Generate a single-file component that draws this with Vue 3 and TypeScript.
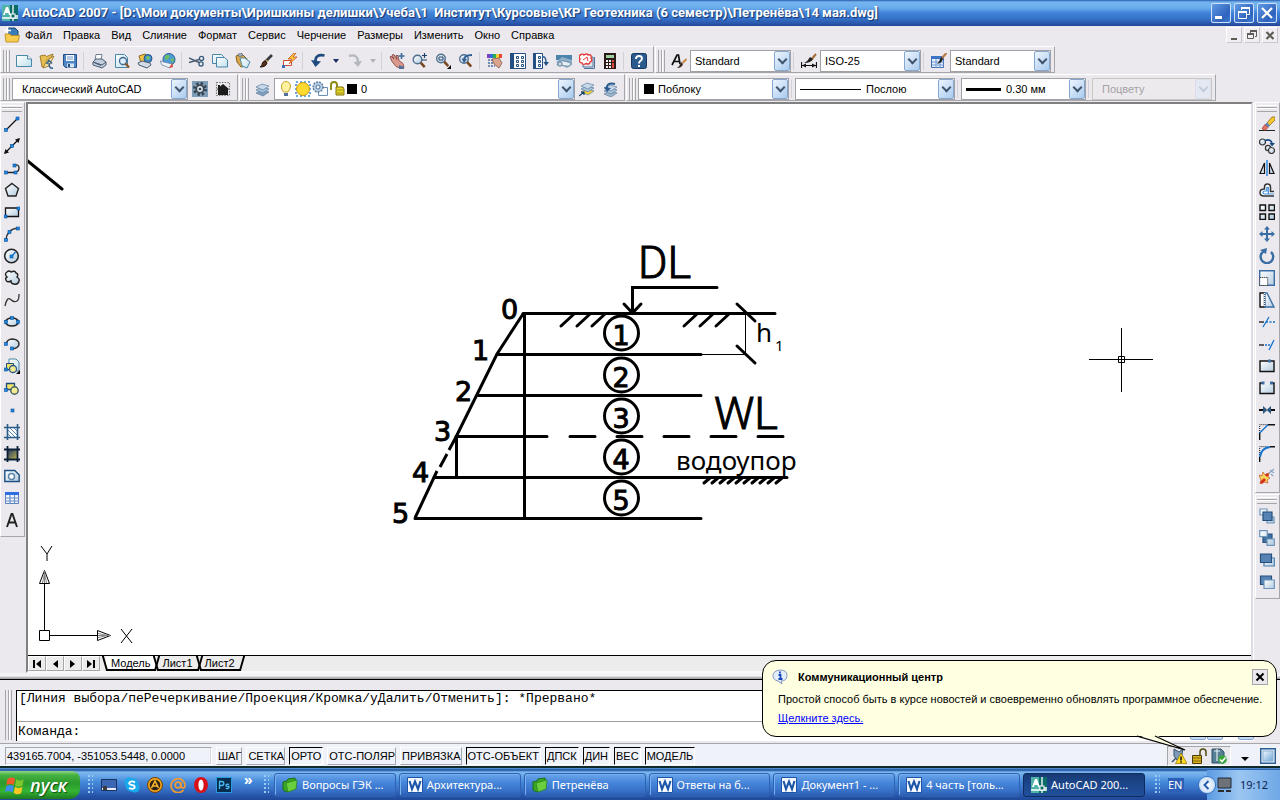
<script setup lang="ts">
import { ref } from 'vue'

type Item = { icon?: string; label?: string; sep?: boolean; drop?: boolean; dim?: boolean }

const sep: Item = { sep: true }
const tool = (icon: string, label: string): Item => ({ icon, label })

/* Small blue grip point used by the drafting icons */
const n = (x: number, y: number) =>
  `<rect x="${x}" y="${y}" width="3" height="3" fill="#1f8ae8" stroke="#0b4f94" stroke-width=".6"/>`
const lens = (x: number, y: number) =>
  `<circle cx="${x}" cy="${y}" r="4.3" fill="url(#glass)" stroke="#4f6f8f" stroke-width="1.4"/><path d="M${x + 3.2} ${y + 3.2}l4 4.4" stroke="#7a4a20" stroke-width="2.6"/>`
const stack = (x: number, y: number, c: string) =>
  `<g stroke="#5e7f9f" stroke-width=".7"><path d="M${x} ${y + 8}l6-3 7 2-6 4z" fill="${c}"/><path d="M${x} ${y + 5}l6-3 7 2-6 4z" fill="#a9c3dc"/><path d="M${x} ${y + 2}l6-3 7 2-6 4z" fill="#c6d8ea"/></g>`

const icons: Record<string, string> = {
  acad: '<rect width="16" height="16" fill="#0b6b66"/><path d="M0 0h8v16H0z" fill="#4fb3a8"/><path d="M1 10L4 2h2l3 8H7l-.6-2H3.400L3 10z" fill="#fff"/><path d="M11 0v16M8 11h8M0 13h16" stroke="#fff" stroke-width="1.300"/><rect x="9" y="9" width="4" height="4" fill="#0b6b66" stroke="#fff"/>',
  dwg: '<path d="M4 1h7l3 3v9H4z" fill="#3a7cb8" stroke="#1c4a78"/><path d="M0 3.500h7M3.500 0v7" stroke="#fff" stroke-width="1.600"/><path d="M1 7h5l1 1.500h8.500L14 15H2z" fill="#f8cd4e" stroke="#b88616" stroke-width=".8"/>',
  new: '<path d="M.5 2.500h11l4 3.500v7.500H.5z" fill="url(#paper)" stroke="#4a86a8"/><path d="M11.500 2.500v3.500h4" fill="#fff" stroke="#4a86a8"/>',
  open: '<path d="M1 3l5-1 1.500 1.500L14 1l-2 4-5 8-4 1z" fill="#e5bd52" stroke="#8f6a1c" stroke-width=".8"/><path d="M4 15l4-8 7-4-5 10z" fill="#f8e39a" stroke="#8f6a1c" stroke-width=".8"/><path d="M14 15q-4 1-4-5M7.500 11L10 7.500l3 3" fill="none" stroke="#35618f" stroke-width="1.500"/>',
  save: '<path d="M1.500 1.500h13v13h-11l-2-2z" fill="#4f86c6" stroke="#244f86"/><path d="M4 2h8v6H4z" fill="#f4f9ff"/><path d="M5 4h6M5 6h6" stroke="#7d9cc0"/><path d="M5 10.500h7v4H5z" fill="#d4e2f2"/><path d="M6 11h2v3H6z" fill="#244f86"/>',
  plot: '<path d="M4 7l1-5.500h6L10 7" fill="#fff" stroke="#6d7f96"/><path d="M2 9l3-3h6l4 3v3l-4 3-9-3z" fill="#c3cfdf" stroke="#4a5a70"/><path d="M2 9l9 3 4-3M4 10l6 2.500" fill="none" stroke="#4a5a70"/>',
  preview: '<path d="M1.500 1.500h9l3 3v10h-12z" fill="url(#paper)" stroke="#4a86a8"/><circle cx="9" cy="8" r="3.500" fill="#dcefff" stroke="#41688c" stroke-width="1.300"/><path d="M11.500 10.500l3.500 4" stroke="#8a5526" stroke-width="2.200"/>',
  publish: '<path d="M2 3l6-2 4 3-1 5-7 1z" fill="#f2c244" stroke="#8f6a1c"/><circle cx="11" cy="5.500" r="4" fill="#3f8fd0" stroke="#1f4f86"/><path d="M9 4q2-2 4 0 0 3-3 3z" fill="#6fc268"/><path d="M1 10l4-2 8 2 1 2-4 3-8-3z" fill="#d3dbe8" stroke="#4a5a70"/>',
  globe: '<circle cx="9" cy="6.500" r="6" fill="#4a9bd6" stroke="#2c5c94"/><path d="M5 3q3-2 5 0l-2 3-3 1zM10 6l4-1-1 5z" fill="#6cbf5f"/><path d="M0 8l8 2 5 1-3 4-8-3z" fill="#eef3f8" stroke="#5f7a98" stroke-width=".7"/><path d="M12 10l1 4-4 1z" fill="#d84a3a"/>',
  cut: '<path d="M0 5l10 4.500M0 9.500l10-3" stroke="#4c5f75" stroke-width="1.500"/><circle cx="12.500" cy="5.500" r="2.100" fill="none" stroke="#36587a" stroke-width="1.300"/><circle cx="12" cy="11" r="2.100" fill="none" stroke="#36587a" stroke-width="1.300"/>',
  copy: '<path d="M.5 1.500h9l2 2v7H.5z" fill="url(#paper)" stroke="#4a86a8"/><path d="M4.500 4.500h8l3 2.500v7h-11z" fill="url(#paper)" stroke="#4a86a8"/>',
  paste: '<path d="M1 3l6-2 5 5-1 7-5 1-4-5z" fill="#dba84a" stroke="#8d621b"/><path d="M3 1l4-.500 1 2-4 1z" fill="#b0bac6" stroke="#5a6573" stroke-width=".7"/><path d="M5 5h5l5 4-3 6-5-2z" fill="url(#paper)" stroke="#4a86a8"/>',
  brush: '<path d="M14 2L7 9" stroke="#3a3a3a" stroke-width="2.600"/><path d="M8 7l2 2" stroke="#cfa56a" stroke-width="1.500"/><path d="M7 8l2 2q-1 4-7 4 3-2 2-3 1-3 3-3z" fill="#55331e" stroke="#20140c"/>',
  blockedit: '<path d="M2.500 7.500h8v5h-8z" fill="#fff" stroke="#c8502c"/><path d="M1 12h3v3H1z" fill="#3b6fb0"/><path d="M13 0L7 6h4l-3 5 8-7h-4l3-4z" fill="#ffc93a" stroke="#c8502c" stroke-width=".8"/>',
  undo: '<path d="M14.500 2.500C8 1 5 4 5.500 9" fill="none" stroke="#1e4a80" stroke-width="2.600"/><path d="M1 7l4.500 7L11 8.500z" fill="#1e4a80"/>',
  redo: '<path d="M2 3C8 1 11 4 11 9" fill="none" stroke="#b4b8bf" stroke-width="2.400"/><path d="M6.500 9L11 14l4-6z" fill="#b4b8bf"/>',
  pan: '<path d="M1 4l1-1 3 3-2-4 2-.5 3 5-1-4h2l1 5 4 3 1 4-3 1-5-2-4-5z" fill="#d99a8d" stroke="#7e3f3c" stroke-width=".8"/><path d="M12.500 0v6M9.500 3h6" stroke="#3f6b9b" stroke-width="1.600"/><path d="M10 12l5 2v2h-5z" fill="#52709a"/>',
  zoomrt: lens(5.5, 6.5) + '<path d="M12.500 0v5M10 2.500h5M10 7h5" stroke="#223f63" stroke-width="1.200"/>',
  zoomwin: lens(6, 5.5) + '<path d="M4 4h4v3H4z" fill="none" stroke="#28486b"/><path d="M16 12v4h-4z" fill="#000"/>',
  zoomprev: lens(6, 6) + '<path d="M6 7q0-5 8-5" fill="none" stroke="#315f92" stroke-width="2"/><path d="M3.500 5.500L6 10l3-4z" fill="#315f92"/>',
  props: '<path d="M0 1h3v4H0z" fill="#7a3fc0"/><path d="M3 1h3v4H3z" fill="#2f6fe0"/><path d="M6 1h3v4H6z" fill="#2cb05a"/><path d="M9 1h3v4H9z" fill="#f0d13a"/><path d="M12 1h3v4h-3z" fill="#e8482e"/><path d="M1 7h8M1 10h6M1 13h7" stroke="#4e6f96" stroke-width="1.600" stroke-dasharray="2 1"/><path d="M5 6l7-1 3 5-3 5-5-4z" fill="#dba48f" stroke="#7e4a3c" stroke-width=".7"/>',
  dcenter: '<path d="M.5.5h15v15H.5z" fill="#fff" stroke="#234f82"/><path d="M0 0h4v16H0z" fill="#234f82"/><g fill="none" stroke="#234f82"><path d="M6.500 3.500h2v2h-2zM11.500 3.500h2v2h-2zM6.500 7.500h2v2h-2zM11.500 7.500h2v2h-2zM6.500 11.500h2v2h-2zM11.500 11.500h2v2h-2z"/></g>',
  palettes: '<path d="M.5.5h9v15h-9z" fill="#fff" stroke="#234f82"/><path d="M0 0h3v16H0z" fill="#234f82"/><path d="M5.500 3.500h2v2h-2zM5.500 7.500h2v2h-2zM5.500 11.500h2v2h-2z" fill="none" stroke="#234f82"/><path d="M9 4q4-1 4 5" fill="none" stroke="#3f6b9b" stroke-width="1.600"/><path d="M10.500 9l2.500 4 3-4z" fill="#234f82"/>',
  sheetset: '<path d="M0 2h16v5H0z" fill="#4d84ac"/><path d="M0 9L6 4l10 3v5l-5 3z" fill="#8fb0c8"/><path d="M1 12q2-5 7-4l7 2q-1 4-5 3z" fill="#e6eff5" stroke="#5a7c98" stroke-width=".8"/><circle cx="4" cy="11" r="2.200" fill="#cbdbe6" stroke="#5a7c98"/>',
  markup: '<path d="M4 4h10v10H4z" fill="#dfe6ee" stroke="#51739b"/><path d="M2 1.500q2-1 3 .5 3-2 4 0 4-1 3 3 2 3-1 4 0 3-4 1.500-3 2-4-.5-4-1-2-4-2-3 1-4.500z" fill="#fff" stroke="#e43b3b" stroke-width="1.400"/><path d="M4 7l4-3 1 4" fill="none" stroke="#e43b3b"/><path d="M15.500 4v11.500H5" fill="none" stroke="#51739b"/>',
  calc: '<path d="M2 0h12v16H2z" fill="#2a1a1a"/><path d="M4 2h8v3H4z" fill="#9fd0a0"/><g fill="#f2f2f2"><path d="M4 7h2v2H4zM7 7h2v2H7zM4 10h2v2H4zM7 10h2v2H7zM4 13h2v2H4zM7 13h2v2H7z"/></g><path d="M10 7h2v2h-2zM10 10h2v5h-2z" fill="#e0483a"/>',
  help: '<rect x=".5" y=".5" width="15" height="15" rx="2" fill="#2b5a8e" stroke="#173a62"/><path d="M5 6q0-3 3-3t3 2.500q0 1.500-1.500 2.300Q8 8.600 8 10.500" fill="none" stroke="#fff" stroke-width="1.900"/><path d="M7 12h2v2H7z" fill="#fff"/>',
  textstyle: '<path d="M1 12L6 2h1.500L9 11M3 8.500h5" fill="none" stroke="#111" stroke-width="1.700"/><path d="M15.500 6l-4 4" stroke="#c98a4a" stroke-width="2"/><path d="M10 9l2 2q-1 4-6 4 3-2 4-6z" fill="#3b2a20"/>',
  dimstyle: '<path d="M.5 9v6M15.500 9v6M1 12.500h14" stroke="#111" stroke-width="1.200"/><path d="M1 12.500l4-2v4zM15 12.500l-4-2v4z" fill="#111"/><path d="M15 1l-5 6" stroke="#a66a35" stroke-width="2"/><path d="M9 4l3 2q-2 4-9 4 4-2 6-6z" fill="#222"/>',
  tablestyle: '<path d="M.5 3.500h12v11H.5z" fill="#e6f0ff" stroke="#3e6db4"/><path d="M0 3h13v3H0z" fill="#3e73c8"/><path d="M1 9h12M1 12h12M5 6v9M9 6v9" stroke="#6f98d4"/><path d="M15.500 0L11 5" stroke="#b97b3d" stroke-width="2.200"/><path d="M10 4l2 2q-1 4-6 5 3-3 4-7z" fill="#222"/>',
  gear: '<path d="M0 0h16v16H0z" fill="#7d9db8"/><circle cx="8" cy="8" r="5" fill="none" stroke="#38444f" stroke-width="4" stroke-dasharray="2.100 1.820"/><circle cx="8" cy="8" r="3.700" fill="#d9e3ea" stroke="#38444f" stroke-width="1.600"/><circle cx="8" cy="8" r="1.300" fill="#38444f"/>',
  home: '<path d="M1.500 1.500h13v13h-13z" fill="none" stroke="#777" stroke-width="1.200" stroke-dasharray="1.500 1.200"/><path d="M2 8l6-5 6 5-1 1v5H3V9z" fill="#1c1c1c"/><path d="M3 4h2v3H3z" fill="#1c1c1c"/>',
  layers: stack(1, 4, '#7fa0bf'),
  layermake: stack(2, 3, '#f5d232') + '<path d="M0 15l5-4M2 11h3v3" fill="none" stroke="#123f70" stroke-width="1.200"/>',
  layerprev: stack(2, 5, '#9fb7cc') + '<path d="M5 8q-1-7 8-5" fill="none" stroke="#2d5b8e" stroke-width="2"/><path d="M2 6l3 5 4-4z" fill="#2d5b8e"/>',
  bulb: '<path d="M5.500 11Q3 8 3.500 5a4.500 4.500 0 0 1 9 0q0 3-2.500 6z" fill="#fff3a0" stroke="#c8a42c"/><path d="M6 12h4v3H6z" fill="#54709c"/>',
  sun: '<path d="M1 1h14v14H1z" fill="none" stroke="#6da8dc" stroke-width="2" stroke-dasharray="2 2"/><circle cx="8" cy="8" r="6.500" fill="#ffd92e" stroke="#c89a1a"/>',
  vp: '<path d="M6.500 6.500h9v8h-9z" fill="#f7fbff" stroke="#6d8fb4"/><circle cx="6" cy="6" r="5" fill="#b9cde2" stroke="#54789e" stroke-width="1.300" stroke-dasharray="2 1"/><circle cx="6" cy="6" r="2" fill="#eef5fb" stroke="#54789e"/>',
  lock: '<path d="M2 9V4q0-3 3-3t3 3v3" fill="none" stroke="#8d8b18" stroke-width="2"/><path d="M7 6h7l1 2v6H7z" fill="#e9da2b" stroke="#7c7010"/><path d="M8 9h6M8 12h6" stroke="#9b8d18"/>',
  line: '<path d="M2 14L14 2" stroke="#111" stroke-width="1.300"/>' + n(0.5, 12.5) + n(12, 1),
  xline: '<path d="M1 15L15 1" stroke="#111" stroke-width="1.300"/><path d="M0 16l1.500-5 3.500 3.500zM16 0l-5 1.500L14.500 5z" fill="#111"/>' + n(6.5, 6.5),
  pline: '<path d="M2 12.500h9M10 5q5-1 5 3t-4 4" fill="none" stroke="#222" stroke-width="1.300"/>' + n(0.5, 11) + n(10, 11) + n(9, 4),
  polygon: '<path d="M8 1.500l6.500 5L12 14H4L1.500 6.500z" fill="url(#glass)" stroke="#222" stroke-width="1.400"/>',
  rect: '<path d="M1.500 4h13v8.500h-13z" fill="url(#glass)" stroke="#111" stroke-width="1.300"/>' + n(0, 11) + n(13, 3),
  arc: '<path d="M2 14Q3 3 14 2" fill="none" stroke="#333" stroke-width="1.300"/>' + n(0.5, 12.5) + n(4, 4.5) + n(12.5, 1),
  circle: '<circle cx="7.500" cy="8" r="6.800" fill="url(#glass)" stroke="#222" stroke-width="1.500"/><path d="M7.500 8.500l4-4.500" stroke="#1673cc" stroke-width="1.300"/>' + n(6, 7),
  cloud: '<path d="M3 2q2-2 4 0 4-2 5 1 3 1 1 4 3 2 2 4-1 4-5 3-3 0-3-3-4 2-5-1-1-2 1-3-3-3 0-5z" fill="url(#glass)" stroke="#222" stroke-width="1.400"/>',
  spline: '<path d="M1 14Q3 5 6 7q4 4 7 2 2-1 2-7" fill="none" stroke="#333" stroke-width="1.300"/>',
  ellipse: '<ellipse cx="8" cy="8" rx="6.500" ry="4" fill="url(#glass)" stroke="#222" stroke-width="1.500"/>' + n(0.5, 6.5) + n(12.500, 6.5) + n(6.5, 2.5),
  earc: '<path d="M2 8q1-5 7-5 6 1 6 5t-7 5" fill="url(#glass)" stroke="#333" stroke-width="1.500"/>' + n(0.5, 6.5) + n(6.5, 11),
  insert: '<path d="M5 1h7l3 3v9H5z" fill="url(#paper)" stroke="#4a86a8"/><path d="M2.500 5.500h7v6h-7z" fill="#f5e56b" stroke="#1d4a78"/><circle cx="9" cy="11" r="3.500" fill="#f3ea94" stroke="#2f5c86" stroke-width="1.300"/><path d="M16 12v4h-4z" fill="#000"/>' + n(0.5, 10),
  block: '<path d="M2.500 3.500h8v6h-8z" fill="#f5e56b" stroke="#1d4a78" stroke-width="1.300"/><circle cx="10.500" cy="10.500" r="3.700" fill="#f3ea94" stroke="#3b5d63" stroke-width="1.400"/>' + n(0.5, 8.5),
  point: n(7, 7),
  hatch: '<path d="M4 4h9v9H4z" fill="#fff"/><path d="M4 10l3 3M4 6l7 7M6 4l7 7M10 4l3 3" stroke="#5a86b0"/><path d="M3.500 0v16M13.500 0v16M0 3.500h16M0 13.500h16" stroke="#2a5c8a" stroke-width="1.600"/>',
  gradient: '<path d="M3 3h10v10H3z" fill="url(#olive)"/><path d="M3.500 0v16M13.500 0v16M0 3.500h16M0 13.500h16" stroke="#0c2038" stroke-width="1.800"/>',
  region: '<path d="M.8 2.500h10l4.400 4.500v6.500H.8z" fill="url(#glass)" stroke="#1c4f82" stroke-width="1.400"/><circle cx="7.500" cy="8.500" r="3" fill="#fff" stroke="#5a86ac" stroke-width="1.500"/>',
  table: '<path d="M1.500 2.500h13v11h-13z" fill="#f2f7ff" stroke="#5a7fbd"/><path d="M1 2h14v3H1z" fill="#2d6fe2"/><path d="M1 8h14M1 11h14M6 5v9M10.500 5v9" stroke="#6b90c8" stroke-width="1.200"/>',
  mtext: '<path d="M3 15L7.500 2h1L13 15M4.500 10.500h7" fill="none" stroke="#222" stroke-width="1.900"/>',
  erase: '<path d="M0 14.500h16" stroke="#222"/><path d="M8 7l5-6h3v3l-6 6z" fill="#f7c931" stroke="#8d6a10" stroke-width=".8"/><path d="M8 6.500l3 3-2 2-3-3z" fill="#5f84bd"/><path d="M6 8.500l3 3-3 3-3-2z" fill="#e8735f" stroke="#8c3428" stroke-width=".7"/>',
  mcopy: '<circle cx="3.500" cy="4" r="3" fill="url(#glass)" stroke="#333" stroke-width="1.200"/><circle cx="9" cy="10" r="2.600" fill="url(#glass)" stroke="#333" stroke-width="1.200"/><circle cx="12.500" cy="12.500" r="3" fill="url(#glass)" stroke="#333" stroke-width="1.200"/><path d="M6 2.500q6-2 7 3" fill="none" stroke="#164b84" stroke-width="1.800"/><path d="M10.500 5h5.500l-3 3.500z" fill="#164b84"/>',
  mirror: '<path d="M8 0v16" stroke="#1f7fd8" stroke-width="1.400"/><path d="M5.500 3v10.500H1zM10.500 3v10.500H15z" fill="url(#glass)" stroke="#111" stroke-width="1.200"/>',
  offset: '<path d="M15 9.500h-3.500V5q0-3-3-3t-3 3v2Q1 7 1 10.500T5 14h10" fill="#fff" stroke="#333" stroke-width="1.500"/><path d="M15 12H6q-2 0-2-1.500T6 9h1.800V5.500h1.500V12" fill="none" stroke="#3d8fe0" stroke-width="1.200"/>',
  array: '<g fill="url(#glass)" stroke="#111" stroke-width="1.400"><path d="M1 1h5.500v5.500H1zM10 1h5.500v5.500H10zM1 10h5.500v5.500H1zM10 10h5.500v5.500H10z"/></g>',
  move: '<path d="M8 2v12M2 8h12" stroke="#3a6ea5" stroke-width="2"/><path d="M8 0l3 3.500H5zM8 16l3-3.500H5zM0 8l3.500-3v6zM16 8l-3.500-3v6z" fill="#3a6ea5"/>',
  rotate: '<path d="M4.500 3.500A6.300 6.300 0 1 0 12 4" fill="none" stroke="#3a6ea5" stroke-width="2.400"/><path d="M1 2l7-2-1 6z" fill="#3a6ea5"/>',
  scale: '<path d="M.7.7h14.600v14.600H.7z" fill="url(#glass)" stroke="#3a6ea5" stroke-width="1.400"/><path d="M.7 7.500h8v8h-8z" fill="#fff" stroke="#111" stroke-dasharray="1 1"/>',
  stretch: '<path d="M5.500 1v14H1V1z" fill="#fff" stroke="#111" stroke-width="1.400"/><path d="M6 1h2l7 14H6z" fill="url(#glass)" stroke="#3a6ea5" stroke-width="1.400"/><path d="M5.500 1v14" stroke="#fff" stroke-width="1.400" stroke-dasharray="1 1"/>',
  trim: '<path d="M0 8h5" stroke="#111" stroke-width="1.300"/><path d="M7 8h9" stroke="#1673cc" stroke-width="1.300" stroke-dasharray="2 1.500"/><path d="M4 13l6-10" stroke="#1673cc" stroke-width="1.300"/>',
  extend: '<path d="M0 9h5" stroke="#111" stroke-width="1.300"/><path d="M6 9h5" stroke="#1673cc" stroke-width="1.300" stroke-dasharray="2 1"/><path d="M10 14l5-10" stroke="#1673cc" stroke-width="1.300"/>',
  break1: '<path d="M1 3h14v10.500H1z" fill="url(#glass)" stroke="#111" stroke-width="1.400"/><path d="M9 1.500h3v3H9z" fill="#3a6ea5"/>',
  break2: '<path d="M1 3h14v10.500H1z" fill="url(#glass)"/><path d="M3 3H1v10.500h14V3h-2" fill="none" stroke="#111" stroke-width="1.400"/><path d="M2.500 1.500h3v3h-3zM11 1.500h3v3h-3z" fill="#3a6ea5"/>',
  join: '<path d="M0 8h5M11 8h5" stroke="#111" stroke-width="1.800"/><path d="M4 4L8.500 8 4 12zM12 4L7.500 8l4.500 4z" fill="#2d587f"/>',
  chamfer: '<path d="M.7 16V9M9 .7h7" stroke="#111" stroke-width="1.400"/><path d="M.7 9V.7H9" fill="none" stroke="#111" stroke-dasharray="1 1"/><path d="M.7 9L9 .7" stroke="#1673cc" stroke-width="1.400"/>',
  fillet: '<path d="M.7 16v-5M11 .7h5" stroke="#111" stroke-width="1.400"/><path d="M.7 9V.7H9" fill="none" stroke="#111" stroke-dasharray="1 1"/><path d="M1 11Q2 2 11 1" fill="none" stroke="#1673cc" stroke-width="2"/>',
  explode: '<path d="M9 6L15 1M11 2l4 3M12 6l2 2" stroke="#88a6c4" stroke-width="1.200"/><path d="M0 7l3 1 1-4 2 3 4-2-1 4 2 1-3 2 1 3-4-1-4 2 1-4z" fill="#f8d85a" stroke="#c4521f" stroke-width=".7"/><path d="M1 14l4-4 2 2-4 4zM6 7l2-2 2 2-2 2z" fill="#d42d1d"/>',
  order1: '<path d="M1 1h7v6H1zM8 9h7v6H8z" fill="url(#glass)" stroke="#6d94b8" stroke-width="1.200"/><path d="M4 4h9v8.500H4z" fill="#5683b3" stroke="#274f7c" stroke-width="1.200"/>',
  order2: '<path d="M4 4h9v8.500H4z" fill="#3f70a4" stroke="#274f7c" stroke-width="1.200"/><path d="M.7.7h7.500v6H.7zM8 9h7.300v6.300H8z" fill="url(#glass)" stroke="#6d94b8" stroke-width="1.200"/>',
  order3: '<path d="M5 6h10.300v8H5z" fill="url(#glass)" stroke="#4a7fae" stroke-width="1.200"/><path d="M1.500 2h11v8.500h-11z" fill="#5683b3" stroke="#274f7c" stroke-width="1.200"/>',
  order4: '<path d="M1.500 2h11v8.500h-11z" fill="#5683b3" stroke="#274f7c" stroke-width="1.200"/><path d="M5 6h10.300v8.500H5z" fill="url(#glass)" stroke="#6d94b8" stroke-width="1.200"/>',
  desktop: '<path d="M.5 2.500h15v11H.5z" fill="#3a66b4" stroke="#1b3160"/><path d="M1 11h14v2H1z" fill="#e8eef5"/><path d="M2 9h4v4H2z" fill="#3d3d3d"/>',
  skype: '<circle cx="5" cy="5" r="4.500" fill="#18a9ea"/><circle cx="11" cy="11" r="4.500" fill="#18a9ea"/><circle cx="8" cy="8" r="6.700" fill="#18a9ea"/><path d="M11 5.500Q8 3.500 6 5t.500 2.600L10 8.600q1.500 1.400 0 2.700t-5-.3" fill="none" stroke="#fff" stroke-width="1.900"/>',
  aimp: '<circle cx="8" cy="8" r="7.500" fill="#f2a31c" stroke="#6b4308"/><circle cx="8" cy="8" r="5.300" fill="#2c2114"/><path d="M4.500 11L8 4l3.500 7M6 9h4" fill="none" stroke="#f9b733" stroke-width="1.600"/>',
  mail: '<path d="M13.500 13A7 7 0 1 1 15 8q0 3-2 3t-2-2V5" fill="none" stroke="#f09a35" stroke-width="1.700"/><circle cx="8" cy="8" r="2.800" fill="none" stroke="#f09a35" stroke-width="1.700"/>',
  opera: '<ellipse cx="8" cy="8" rx="7" ry="8" fill="#d81118"/><ellipse cx="8" cy="8" rx="2.600" ry="5.500" fill="#fff"/>',
  ps: '<path d="M.5.5h15v15H.5z" fill="#062d4d" stroke="#2c9be0"/><path d="M3.500 12V4.500h2.300q2 0 2 2t-2 2H3.500M13 7.500q-3-.8-3 .8t3 1.200q.6 2.700-3.200 1.800" fill="none" stroke="#4dbcf5" stroke-width="1.300"/>',
  folder: '<path d="M1 5l4-1 1-2 7-1 1 10-9 4-4-2z" fill="#3aa827" stroke="#1f6d14"/><path d="M4 6l11-3-1 9-8 3z" fill="#69cf3f" stroke="#2a8419" stroke-width=".7"/>',
  word: '<path d="M.5.5h15v15H.5z" fill="#f4f8fd" stroke="#1c55a8"/><path d="M2.500 4L5 12l3-7.500L11 12l2.500-8" fill="none" stroke="#1c55a8" stroke-width="2.100"/>',
  comm: '<path d="M3 1l5 3 4-3-1 5 1 6H6L3 8z" fill="#7f9ab8" stroke="#34506e"/><path d="M1 14l4-4" stroke="#34506e" stroke-width="1.400"/><path d="M10 5l6 10.500H4.500z" fill="#ffd91f" stroke="#8c7300" stroke-width=".7"/><path d="M10 8.500v4M10 13.200v1.600" stroke="#111" stroke-width="1.500"/>',
  unlocked: '<path d="M9 7V4q0-3 3-3t3 3v4" fill="none" stroke="#544a12" stroke-width="1.500"/><path d="M1.500 7.500h9v8h-9z" fill="#dcb51c" stroke="#4b3c08"/><path d="M2 10h8M2 13h8" stroke="#7b6410"/>',
  trust: '<path d="M1 1h9l3 3v11H1z" fill="#567f96" stroke="#2c4f66"/><path d="M3 3h6M6 1v12" stroke="#e1ecf2" stroke-width="1.200"/><circle cx="11.500" cy="11.500" r="4.300" fill="#38a53a"/><path d="M9 11.500l2 2 3.500-4" fill="none" stroke="#fff" stroke-width="1.600"/>',
  clean: '<path d="M.7.7h14.600v14.600H.7z" fill="#dcecf8" stroke="#2d5f94" stroke-width="1.400"/><path d="M3 3h10v10H3z" fill="url(#pane)" stroke="#8fb3d4"/>',
  monitor: '<path d="M1 1h13v10H1z" fill="#6e7278" stroke="#1d2a3a"/><path d="M1 14h6M9 14h5" stroke="#2a2a2a" stroke-width="2.200"/>',
  info: '<path d="M8 1q7 0 7 5.500T9 12l1 3-4-3Q1 11 1 6.500T8 1z" fill="#e4eefb" stroke="#8098c0"/><path d="M8 2.500v2M6.500 6H8.500V10M6.500 10h4" fill="none" stroke="#1846b8" stroke-width="1.800"/>',
  flag: '<path d="M2 3q3-2 6 0L7 8Q4 6.500 1 8z" fill="#ef5b2a"/><path d="M9 3.300q3 2 6 0l-1 5q-3 2-6 0z" fill="#7fc62c"/><path d="M1 9q3-1.600 6 0l-1 5q-3-2-6-.5z" fill="#3f8df0"/><path d="M8 9.300q3 2 6 0l-1 5q-3 2-6 0z" fill="#fbc821"/>',
}

const menus = ['Файл', 'Правка', 'Вид', 'Слияние', 'Формат', 'Сервис', 'Черчение', 'Размеры', 'Изменить', 'Окно', 'Справка']

const standard: Item[] = [
  tool('new', 'Создать'), tool('open', 'Открыть'), tool('save', 'Сохранить'), sep,
  tool('plot', 'Печать'), tool('preview', 'Предварительный просмотр'), tool('publish', 'Публикация'), tool('globe', '3D DWF'), sep,
  tool('cut', 'Вырезать'), tool('copy', 'Копировать'), tool('paste', 'Вставить'), tool('brush', 'Копирование свойств'), tool('blockedit', 'Редактор блоков'), sep,
  tool('undo', 'Отменить'), { drop: true, label: 'Список отмены' }, tool('redo', 'Повторить'), { drop: true, dim: true, label: 'Список повтора' }, sep,
  tool('pan', 'Панорамирование'), tool('zoomrt', 'Зумирование'), tool('zoomwin', 'Показать рамкой'), tool('zoomprev', 'Показать предыдущий'), sep,
  tool('props', 'Свойства'), tool('dcenter', 'Центр управления'), tool('palettes', 'Палитры'), tool('sheetset', 'Подшивки'), tool('markup', 'Пометки'), tool('calc', 'Калькулятор'), sep,
  tool('help', 'Помощь'),
]

const styles = [
  { icon: 'textstyle', label: 'Текстовый стиль', value: 'Standard' },
  { icon: 'dimstyle', label: 'Размерный стиль', value: 'ISO-25' },
  { icon: 'tablestyle', label: 'Стиль таблиц', value: 'Standard' },
]

const draw: Item[] = [
  tool('line', 'Отрезок'), tool('xline', 'Прямая'), tool('pline', 'Полилиния'), tool('polygon', 'Многоугольник'), tool('rect', 'Прямоугольник'),
  tool('arc', 'Дуга'), tool('circle', 'Круг'), tool('cloud', 'Облако'), tool('spline', 'Сплайн'), tool('ellipse', 'Эллипс'), tool('earc', 'Эллиптическая дуга'),
  tool('insert', 'Вставить блок'), tool('block', 'Создать блок'), tool('point', 'Точка'), tool('hatch', 'Штриховка'), tool('gradient', 'Градиент'),
  tool('region', 'Область'), tool('table', 'Таблица'), tool('mtext', 'Многострочный текст'),
]
const modify: Item[] = [
  tool('erase', 'Стереть'), tool('mcopy', 'Копировать объект'), tool('mirror', 'Зеркало'), tool('offset', 'Подобие'), tool('array', 'Массив'), tool('move', 'Перенести'),
  tool('rotate', 'Повернуть'), tool('scale', 'Масштаб'), tool('stretch', 'Растянуть'), tool('trim', 'Обрезать'), tool('extend', 'Удлинить'), tool('break1', 'Разорвать в точке'),
  tool('break2', 'Разорвать'), tool('join', 'Соединить'), tool('chamfer', 'Фаска'), tool('fillet', 'Сопряжение'), tool('explode', 'Расчленить'),
]
const order: Item[] = [tool('order1', 'На передний план'), tool('order2', 'На задний план'), tool('order3', 'Перед объектами'), tool('order4', 'За объектами')]

const sheets = ['Модель', 'Лист1', 'Лист2']
const activeSheet = ref('Модель')

const modes = ref([
  { name: 'ШАГ', on: false }, { name: 'СЕТКА', on: false }, { name: 'ОРТО', on: true }, { name: 'ОТС-ПОЛЯР', on: false },
  { name: 'ПРИВЯЗКА', on: false }, { name: 'ОТС-ОБЪЕКТ', on: true }, { name: 'ДПСК', on: true }, { name: 'ДИН', on: true },
  { name: 'ВЕС', on: true }, { name: 'МОДЕЛЬ', on: true },
])

const quick = [tool('desktop', 'Рабочий стол'), tool('skype', 'Skype'), tool('aimp', 'AIMP'), tool('mail', 'Агент'), tool('opera', 'Opera'), tool('ps', 'Photoshop')]
const tasks = [
  { icon: 'folder', name: 'Вопросы ГЭК ...' }, { icon: 'word', name: 'Архитектура...' }, { icon: 'folder', name: 'Петренёва' },
  { icon: 'word', name: 'Ответы на б...' }, { icon: 'word', name: 'Документ1 - ...' }, { icon: 'word', name: '4 часть [толь...' },
  { icon: 'acad', name: 'AutoCAD 200...', active: true },
]

const command = ref('')
const balloon = ref(true)

/* Numbers standing at the left end of each soil boundary */
const levels = [
  { x: 501, y: 319, t: '0' }, { x: 472, y: 360, t: '1' }, { x: 455, y: 401, t: '2' },
  { x: 434, y: 441, t: '3' }, { x: 412, y: 482, t: '4' }, { x: 392, y: 523, t: '5' },
]
const layers = [333, 375, 416, 457, 498]
const soil = [561, 577, 592, 684, 700, 716]
const rock = Array.from({ length: 10 }, (_, i) => 704 + i * 8)
</script>

<template>
  <div class="app">
    <svg class="defs" aria-hidden="true">
      <defs>
        <linearGradient id="glass" x1="0" y1="0" x2="1" y2="1"><stop offset="0" stop-color="#fff" /><stop offset="1" stop-color="#b4cce0" /></linearGradient>
        <linearGradient id="paper" x1="0" y1="0" x2="1" y2="1"><stop offset="0" stop-color="#fff" /><stop offset="1" stop-color="#bfe0ee" /></linearGradient>
        <linearGradient id="olive" x1="0" y1="0" x2="1" y2="1"><stop offset="0" stop-color="#17306a" /><stop offset="1" stop-color="#b9ae4a" /></linearGradient>
        <linearGradient id="pane" x1="0" y1="0" x2="1" y2="1"><stop offset="0" stop-color="#f0f8ff" /><stop offset="1" stop-color="#6fa5d6" /></linearGradient>
      </defs>
    </svg>

    <header class="title">
      <svg class="ic" viewBox="0 0 16 16" v-html="icons.acad" />
      <h1>AutoCAD 2007 - [D:\Мои документы\Иришкины делишки\Учеба\1&nbsp; Институт\Курсовые\КР Геотехника (6 семестр)\Петренёва\14 мая.dwg]</h1>
      <div class="winbtns">
        <button aria-label="Свернуть"><svg viewBox="0 0 16 16"><path d="M2 11h7v3H2z" fill="#fff" /></svg></button>
        <button aria-label="Восстановить"><svg viewBox="0 0 16 16"><path d="M5.500 5V2.500h8v7H11M2.500 6.500h8v7h-8z" fill="none" stroke="#fff" /><path d="M5 2h9v2H5zM2 6h9v2H2z" fill="#fff" /></svg></button>
        <button aria-label="Закрыть"><svg viewBox="0 0 16 16"><path d="M3 3l10 10M13 3L3 13" stroke="#fff" stroke-width="2.200" /></svg></button>
      </div>
    </header>

    <nav class="menu">
      <svg class="ic" viewBox="0 0 16 16" v-html="icons.dwg" />
      <button v-for="m in menus" :key="m">{{ m }}</button>
      <div class="docbtns">
        <button aria-label="Свернуть документ"><svg viewBox="0 0 12 12"><path d="M3 9h6v2H3z" fill="#5f5b55" /></svg></button>
        <button aria-label="Восстановить документ"><svg viewBox="0 0 12 12"><path d="M4.500 4V2.500h6v5H9M1.500 5.500h6v4h-6z" fill="none" stroke="#5f5b55" /><path d="M4 1h7v2H4zM1 4h7v2H1z" fill="#5f5b55" /></svg></button>
        <button aria-label="Закрыть документ"><svg viewBox="0 0 12 12"><path d="M2.500 3l7 7M9.500 3l-7 7" stroke="#5f5b55" stroke-width="2.200" /></svg></button>
      </div>
    </nav>

    <div class="row">
      <div class="bar">
        <i class="grip" />
        <template v-for="(t, i) in standard" :key="i">
          <i v-if="t.sep" class="sep" />
          <button v-else-if="t.drop" class="drop" :class="{ dim: t.dim }" :aria-label="t.label"><svg viewBox="0 0 6 4"><path d="M0 0h6L3 4z" fill="currentColor" /></svg></button>
          <button v-else class="tool" :aria-label="t.label"><svg class="ic" viewBox="0 0 16 16" v-html="icons[t.icon!]" /></button>
        </template>
        <i class="end" />
      </div>
      <div class="bar">
        <i class="grip" />
        <template v-for="(s, i) in styles" :key="s.icon">
          <i v-if="i" class="sep" />
          <button class="tool" :aria-label="s.label"><svg class="ic" viewBox="0 0 16 16" v-html="icons[s.icon]" /></button>
          <span class="combo w101"><select :aria-label="s.label"><option>{{ s.value }}</option></select><i class="arrow" /></span>
        </template>
        <i class="end" />
      </div>
    </div>

    <div class="row">
      <div class="bar">
        <i class="grip" />
        <span class="combo w176"><select aria-label="Рабочее пространство"><option>Классический AutoCAD</option></select><i class="arrow" /></span>
        <button class="tool" aria-label="Параметры пространства"><svg class="ic" viewBox="0 0 16 16" v-html="icons.gear" /></button>
        <button class="tool" aria-label="Моё пространство"><svg class="ic" viewBox="0 0 16 16" v-html="icons.home" /></button>
        <i class="end" />
      </div>
      <div class="bar">
        <i class="grip" />
        <button class="tool" aria-label="Диспетчер слоев"><svg class="ic" viewBox="0 0 16 16" v-html="icons.layers" /></button>
        <span class="combo w301">
          <svg v-for="k in ['bulb', 'sun', 'vp', 'lock']" :key="k" class="ic" viewBox="0 0 16 16" v-html="icons[k]" />
          <i class="swatch" />
          <select aria-label="Слой"><option>0</option></select><i class="arrow" />
        </span>
        <button class="tool" aria-label="Сделать слой объекта текущим"><svg class="ic" viewBox="0 0 16 16" v-html="icons.layermake" /></button>
        <button class="tool" aria-label="Предыдущее состояние слоев"><svg class="ic" viewBox="0 0 16 16" v-html="icons.layerprev" /></button>
        <i class="end" />
      </div>
      <div class="bar">
        <i class="grip" />
        <span class="combo w151"><i class="swatch lead" /><select aria-label="Цвет"><option>Поблоку</option></select><i class="arrow" /></span>
        <i class="sep" />
        <span class="combo w160"><i class="ltype" /><select aria-label="Тип линий"><option>Послою</option></select><i class="arrow" /></span>
        <i class="sep" />
        <span class="combo w125"><i class="lweight" /><select aria-label="Вес линий"><option>0.30 мм</option></select><i class="arrow" /></span>
        <i class="sep" />
        <span class="combo off w120"><select aria-label="Стиль печати" disabled><option>Поцвету</option></select><i class="arrow" /></span>
        <i class="end" />
      </div>
    </div>

    <main class="work">
      <aside class="side">
        <div class="vbar">
          <i class="vgrip" />
          <button v-for="t in draw" :key="t.icon" :aria-label="t.label"><svg class="ic" viewBox="0 0 16 16" v-html="icons[t.icon!]" /></button>
        </div>
      </aside>

      <section class="doc">
        <div class="canvas">
          <svg class="drawing" role="img" aria-label="Чертеж">
            <g transform="translate(-28 -104)" fill="none" stroke="#000" stroke-width="3" stroke-linecap="round">
              <path d="M24 158L62 189" />
              <path d="M523 313.500H775M497 354.500H701M477 395.500H701M456 436.500H547M570 436.500h25M617 436.500h25M664 436.500h25M711 436.500h25M758 436.500h25M434 477.500H787M415 518.500H701" />
              <path d="M524.500 314V518M456.500 437V477" />
              <path d="M523 314L497 354L456 437L449 450M447 454L440 467M437 471L415 518" stroke-linecap="butt" />
              <path d="M632.500 310V287.500H717M624 304l8.500 9 8.500-9" />
              <path v-for="x in soil" :key="x" :d="`M${x} 326l13-12`" />
              <path v-for="x in rock" :key="'r' + x" :d="`M${x} 483l6-5`" />
              <path d="M701 354.500H745.500V314" stroke-width="1" />
              <path d="M737 304l18 17M737 346l18 17" />
              <circle v-for="y in layers" :key="'c' + y" cx="621.500" :cy="y" r="17" />
              <g stroke-width="1" stroke-linecap="butt">
                <path d="M1089 359.500h28M1126 359.500h27M1121.500 328v28M1121.500 364v28M1118.500 356.500h6v6h-6zM1117 359.500h9M1121.500 356v8" />
              </g>
              <g class="cad" fill="#000">
                <text v-for="l in levels" :key="l.t" :x="l.x" :y="l.y">{{ l.t }}</text>
                <text v-for="(y, i) in layers" :key="'t' + y" x="621" :y="y + 12" text-anchor="middle">{{ i + 1 }}</text>
                <text class="big" x="638" y="278">DL</text>
                <text class="big" x="714" y="429">WL</text>
                <text class="note" x="756" y="342">h</text>
                <text class="sub" x="775" y="351">1</text>
                <text class="note" x="676" y="470">водоупор</text>
              </g>
            </g>
          </svg>
          <svg class="ucs" viewBox="0 0 100 102" aria-hidden="true">
            <g fill="none" stroke="#000">
              <path d="M1.500 85.500h10v10h-10zM6.500 85V38M12 90.500h48M1.500 38.500h10L6.500 25.500zM59.500 85.500v10l13-5z" />
              <path d="M6.500 26v12M4.500 38l2-10 2 10M60 90.500h12M60 88.500l10 2-10 2" stroke="#888" />
              <path d="M3 1l6 8v7M14 1L9 9M83 84l11 14M94 84L83 98" />
            </g>
          </svg>
        </div>
        <div class="sheets">
          <button class="nav" aria-label="Первый лист"><svg viewBox="0 0 10 10"><path d="M1 1h2v8H1zM9 1v8L4 5z" /></svg></button>
          <button class="nav" aria-label="Предыдущий лист"><svg viewBox="0 0 10 10"><path d="M8 1v8L3 5z" /></svg></button>
          <button class="nav" aria-label="Следующий лист"><svg viewBox="0 0 10 10"><path d="M2 1v8l5-4z" /></svg></button>
          <button class="nav" aria-label="Последний лист"><svg viewBox="0 0 10 10"><path d="M7 1h2v8H7zM1 1v8l5-4z" /></svg></button>
          <button v-for="s in sheets" :key="s" class="sheet" :class="{ on: s === activeSheet }" @click="activeSheet = s">{{ s }}</button>
        </div>
      </section>

      <aside class="side right">
        <div class="vbar">
          <i class="vgrip" />
          <button v-for="t in modify" :key="t.icon" :aria-label="t.label"><svg class="ic" viewBox="0 0 16 16" v-html="icons[t.icon!]" /></button>
        </div>
        <div class="vbar">
          <i class="vgrip" />
          <button v-for="t in order" :key="t.icon" :aria-label="t.label"><svg class="ic" viewBox="0 0 16 16" v-html="icons[t.icon!]" /></button>
        </div>
      </aside>
    </main>

    <section class="command">
      <i class="grip tall" />
      <div class="console">
        <p>[Линия выбора/пеРечеркивание/Проекция/Кромка/уДалить/Отменить]: *Прервано*</p>
        <label>Команда:<input v-model="command" type="text" /><i class="thumb" /><i class="thumb" /><i class="thumb last" /></label>
      </div>
    </section>

    <footer class="status">
      <output class="coords">439165.7004, -351053.5448, 0.0000</output>
      <button v-for="m in modes" :key="m.name" :class="{ on: m.on }" :aria-pressed="m.on" @click="m.on = !m.on">{{ m.name }}</button>
      <div class="tray">
        <svg v-for="k in ['comm', 'unlocked', 'trust']" :key="k" class="ic" viewBox="0 0 16 16" v-html="icons[k]" />
      </div>
      <i class="more" />
      <svg class="ic" viewBox="0 0 16 16" v-html="icons.clean" />
    </footer>

    <div class="taskbar">
      <button class="start"><svg class="flag" viewBox="0 0 16 16" v-html="icons.flag" />пуск</button>
      <i class="dots first" />
      <button v-for="q in quick" :key="q.icon" class="quick" :aria-label="q.label"><svg class="ic" viewBox="0 0 16 16" v-html="icons[q.icon!]" /></button>
      <span class="chev">»</span>
      <i class="dots second" />
      <div class="tasks">
        <button v-for="t in tasks" :key="t.name" :class="{ active: t.active }"><svg class="ic" viewBox="0 0 16 16" v-html="icons[t.icon]" />{{ t.name }}</button>
      </div>
      <i class="dots" />
      <span class="lang">EN</span>
      <div class="notify">
        <button class="expand" aria-label="Показать значки"><svg viewBox="0 0 16 16"><path d="M9.500 4l-4 4 4 4" fill="none" stroke="#245bb0" stroke-width="2" /></svg></button>
        <svg class="ic" viewBox="0 0 16 16" v-html="icons.monitor" />
        <time>19:12</time>
      </div>
    </div>

    <div v-if="balloon" class="balloon" role="status">
      <div class="head">
        <svg class="ic" viewBox="0 0 16 16" v-html="icons.info" />
        <strong>Коммуникационный центр</strong>
        <button aria-label="Закрыть уведомление" @click="balloon = false"><svg viewBox="0 0 10 10"><path d="M1.500 1.500l7 7M8.500 1.500l-7 7" stroke="#000" stroke-width="2" /></svg></button>
      </div>
      <p>Простой способ быть в курсе новостей и своевременно обновлять программное обеспечение.</p>
      <a href="#">Щелкните здесь.</a>
      <svg class="tail" viewBox="0 0 50 16" aria-hidden="true"><path d="M0 0h19L48 15z" fill="#ffffe1" /><path d="M0 1l48 14L18 1" fill="none" stroke="#000" stroke-width="1.200" /></svg>
    </div>
  </div>
</template>

<style>
body { margin: 0; background: #ebe9ee; }
</style>

<style scoped>
.app { position: relative; min-height: 100vh; display: flex; flex-direction: column; background: #ebe9ee; color: #000; font: 11px/14px "Liberation Sans", Arial, sans-serif; overflow: hidden; }
.app * { box-sizing: border-box; }
.defs { position: absolute; width: 0; height: 0; }
button { font: inherit; color: inherit; border: 0; padding: 0; margin: 0; background: none; }
svg { display: block; flex: none; }
i { display: block; flex: none; }
.ic { width: 16px; height: 16px; }

.title { display: flex; align-items: center; height: 26px; padding: 0 3px 0 2px; color: #fff; background: linear-gradient(#2a5cae 0, #74b4f0 2px, #6aabec 8px, #3f82d8 13px, #3775cc 18px, #2b59ae 23px, #23489a 100%); }
.title h1 { flex: 1; margin: 0 0 0 4px; font: 700 13px/18px Roboto, "Noto Sans", Tahoma, sans-serif; white-space: nowrap; text-shadow: 1px 1px 1px #12306c; }
.winbtns { display: flex; gap: 3px; }
.winbtns button { width: 20px; height: 20px; padding: 1px; border: 1px solid #cfe0f8; border-radius: 2px; background: linear-gradient(135deg, #5f9ae4, #2f63bd 70%, #3a7bd4); }

.menu { display: flex; align-items: center; height: 20px; padding: 0 2px 2px 4px; }
.menu > button { padding: 0 5px 0 6px; }
.menu .ic { margin-right: -1px; }
.docbtns { display: flex; gap: 2px; margin-left: auto; }
.docbtns button { width: 16px; height: 16px; padding: 1px; border: 1px solid; border-color: #fff #c9c7cc #c9c7cc #fff; background: #f0eef2; }

.row { display: flex; gap: 1px; height: 28px; }
.bar { display: flex; align-items: center; height: 27px; padding: 3px 0 0 2px; border: 1px solid; border-color: #fff #a6a5aa #a6a5aa #fff; }
.grip { width: 7px; height: 22px; margin-right: 2px; border: 1px solid; border-color: #fff #a6a5aa; border-width: 0 1px; background: linear-gradient(90deg, transparent 2px, #a6a5aa 2px, #a6a5aa 3px, #fff 3px, #fff 4px, transparent 4px); }
.sep { width: 6px; height: 18px; background: linear-gradient(90deg, transparent 2px, #d2d0d8 2px, #d2d0d8 3px, transparent 3px); }
.end { width: 3px; }
.tool { display: grid; place-items: center; width: 23px; height: 22px; }
.drop { display: grid; place-items: center; width: 14px; height: 22px; color: #1c2f66; }
.drop svg { width: 6px; height: 4px; }
.drop.dim { width: 13px; color: #b4b2b8; }

.combo { display: flex; align-items: center; height: 22px; border: 1px solid #a2a1a6; background: #fff; }
.combo select { flex: 1; min-width: 0; height: 20px; padding: 0 0 0 4px; margin: 0; border: 0; appearance: none; background: none; color: #000; font: inherit; }
.combo .ic { margin-left: 1px; }
.arrow { width: 16px; height: 20px; border: 1px solid #86a8d0; border-radius: 2px; background: linear-gradient(135deg, #eef5ff, #a9cbee); display: grid; place-items: center; }
.arrow::after { content: ""; width: 5px; height: 5px; margin-top: -3px; border: solid #41566e; border-width: 0 2px 2px 0; transform: rotate(45deg); }
.combo.off { background: #eceaec; border-color: #c9c7c4; }
.combo.off select { color: #a3a1a6; opacity: 1; padding-left: 9px; }
.combo.off .arrow { border-color: #d5dcea; background: #e2e8f4; opacity: .8; }
.combo.off .arrow::after { border-color: #b9c3d4; }
.w101 { width: 101px; }
.w176 { width: 176px; }
.w176 select { padding-left: 9px; }
.w301 { width: 301px; padding-left: 2px; }
.w151 { width: 151px; }
.w160 { width: 160px; }
.w125 { width: 125px; }
.w120 { width: 120px; }
.swatch { width: 10px; height: 10px; margin-left: 2px; background: #000; }
.swatch.lead { margin-left: 5px; }
.ltype { width: 61px; height: 1px; margin: 0 1px 0 4px; background: #000; }
.lweight { width: 35px; height: 3px; margin: 0 1px 0 4px; background: #000; }

.work { flex: 1; display: flex; min-height: 560px; }
.side { width: 26px; padding-right: 1px; border-right: 0; }
.side.right { width: 27px; padding: 0 0 0 1px; border-left: 1px solid #fff; }
.vbar { display: flex; flex-direction: column; align-items: center; padding: 2px 1px 5px 0; border: 1px solid; border-color: #fff #a6a5aa #a6a5aa #fff; }
.vbar + .vbar { margin-top: 1px; }
.vbar button { display: grid; place-items: center; width: 22px; height: 22px; }
.vgrip { width: 20px; height: 7px; margin-bottom: 1px; border: solid; border-width: 1px 0; border-color: #fff #a6a5aa #a6a5aa; background: linear-gradient(transparent 1px, #a6a5aa 1px, #a6a5aa 2px, #fff 2px, #fff 3px, transparent 3px); }

.doc { flex: 1; min-width: 0; display: flex; flex-direction: column; border: 2px solid; border-color: #808080 #dcdce4 #f8f8f8 #808080; }
.canvas { position: relative; flex: 1; background: #fff; border-bottom: 1px solid #000; }
.drawing { position: absolute; inset: 0; width: 100%; height: 100%; }
.ucs { position: absolute; left: 10px; bottom: 8px; width: 100px; height: 102px; }
.cad { font-family: "DejaVu Sans", sans-serif; font-size: 27px; stroke-width: 1px; }
.cad .big { font-family: Roboto, "DejaVu Sans", sans-serif; font-size: 45px; font-weight: 300; }
.cad .note { font: 26px "Noto Sans", Tahoma, sans-serif; stroke: none; }
.cad .sub { font: 15px "Noto Sans", Tahoma, sans-serif; stroke: none; }

.sheets { display: flex; height: 15px; background: #ececec; }
.nav { display: grid; place-items: center; width: 18px; border: 1px solid; border-color: #fff #a6a5aa #a6a5aa #fff; }
.nav svg { width: 10px; height: 10px; }
.sheet { position: relative; padding: 1px 6px 0 5px; margin-right: 1px; border-bottom: 2px solid #000; line-height: 12px; }
.nav + .sheet { margin-left: 6px; }
.sheet::before, .sheet::after { content: ""; position: absolute; top: 0; bottom: -2px; width: 4px; }
.sheet::before { left: -2px; border-left: 2px solid #000; transform: skewX(16deg); }
.sheet::after { right: -2px; border-right: 2px solid #000; transform: skewX(-16deg); }
.sheet.on { background: #fff; }

.command { display: flex; height: 70px; padding: 17px 26px 2px 5px; background: linear-gradient(#f3f2f5 3px, #a6a5aa 5px, #a6a5aa 6px, #000 6px, #000 7px, #ebe9ee 7px); }
.grip.tall { height: 50px; margin-right: 4px; }
.console { flex: 1; border: solid #000; border-width: 1px 0 0 1px; background: #fff; font: 13px/15px "Liberation Mono", "Courier New", monospace; display: flex; flex-direction: column; justify-content: space-between; }
.console p { margin: 0; padding: 0 0 15px 2px; border-bottom: 1px solid #a0a0a0; white-space: nowrap; }
.console label { display: flex; padding: 0 0 1px 1px; }
.console input { flex: 1; min-width: 0; border: 0; padding: 0; outline: 0; font: inherit; background: none; }
.thumb { width: 16px; height: 16px; margin-left: 1px; border: 1px solid #86a8d0; border-radius: 2px; background: #c4daf5; }
.thumb.last { margin-left: 15px; }

.status { display: flex; align-items: center; gap: 4px; height: 25px; padding: 3px 4px 1px 5px; border-top: 1px solid #a6a5aa; border-bottom: 2px solid #0e2a2a; background: #eff2f8; }
.coords { width: 207px; height: 18px; padding: 1px; border: 1px solid; border-color: #a6a5aa #fff #fff #a6a5aa; box-shadow: inset -1px -1px #d8d8dd; }
.status > button { height: 18px; padding: 0 0 0 1px; border: 1px solid; border-color: #fff #a6a5aa #a6a5aa #fff; }
.status > button.on { padding-right: 1px; border-color: #000 #fff #fff #000; }
.tray { display: flex; gap: 4px; margin-left: auto; width: 64px; height: 20px; align-items: center; border: 1px solid; border-color: #a6a5aa #fff #fff #a6a5aa; padding-left: 3px; background: #e9e8ec; }
.more { margin: 5px 7px 0 6px; border: 4px solid transparent; border-top-color: #000; border-bottom-width: 0; }

.taskbar { display: flex; align-items: center; height: 32px; background: linear-gradient(#5f9fd8 0, #1e4e9e 2px, #7db8ee 4px, #6aa8e8 8px, #4488da 14px, #3a76ca 20px, #2857ae 27px, #1f4898 100%); color: #fff; font: 11px/14px "Noto Sans", Tahoma, sans-serif; padding-top: 2px; }
.start { display: flex; align-items: center; gap: 5px; width: 80px; height: 28px; padding: 0 0 0 5px; border-radius: 0 8px 10px 0; background: linear-gradient(#8fd58a 0, #46b240 4px, #2b9a2c 12px, #35b434 20px, #1c7a1f 100%); font: italic 600 18px/24px "Open Sans", "Noto Sans", sans-serif; text-shadow: 1px 1px 1px #14511a; }
.flag { width: 20px; height: 20px; }
.dots { width: 5px; height: 20px; margin: 0 8px 0 10px; background: radial-gradient(circle at 1px 1px, #9cc8f4 1px, transparent 1px) 0 0 / 4px 4px; }
.dots.first { margin: 0 4px 0 8px; }
.dots.second { margin: 0 5px 0 8px; }
.quick { display: grid; place-items: center; width: 23px; height: 24px; }
.chev { width: 12px; margin: 0 0 10px 9px; font-size: 14px; font-weight: 700; line-height: 14px; }
.tasks { flex: 1; display: flex; gap: 3px; }
.tasks button { flex: 1; min-width: 0; max-width: 160px; height: 24px; display: flex; align-items: center; gap: 4px; padding: 0 7px; border: 1px solid #2f62b2; border-radius: 3px; background: linear-gradient(#6ba6ea, #4585da 40%, #3872c8 75%, #2b5cb2); white-space: nowrap; overflow: hidden; box-shadow: inset 1px 1px #76b0ee; }
.tasks button.active { background: linear-gradient(#173a74, #1d478c 50%, #204f9a); border-color: #102c5c; box-shadow: none; }
.lang { width: 16px; margin: 0 15px 0 0; background: #2c5fb8; }
.notify { display: flex; align-items: center; gap: 2px; height: 30px; padding-right: 12px; background: linear-gradient(90deg, transparent 8px, #5b9be2 8px, #9cc6f2 40px, #6ea8e6); }
.notify time { margin-left: 5px; color: #0c2350; }
.expand { width: 16px; height: 16px; border-radius: 50%; background: radial-gradient(#fff, #b7d4f4); box-shadow: 0 0 0 1px #3b72c0; }

.balloon { position: absolute; right: 3px; bottom: 63px; width: 515px; padding: 8px 12px 11px 15px; border: 1px solid #000; border-radius: 14px; background: #ffffe1; }
.head { display: flex; align-items: center; gap: 4px; height: 16px; margin-left: -6px; }
.head strong { flex: 1; padding-left: 6px; }
.head button { width: 16px; height: 16px; padding: 2px; margin-right: -4px; border: 1px solid #a6a5aa; background: #ebe9ee; }
.balloon p { margin: 7px 0 5px; white-space: nowrap; }
.balloon a { color: #00f; }
.tail { position: absolute; left: 374px; top: 100%; width: 50px; height: 16px; margin-top: -1px; }
</style>
